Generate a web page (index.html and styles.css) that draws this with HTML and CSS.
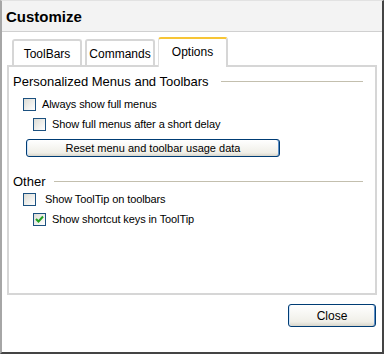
FILE: index.html
```html
<!DOCTYPE html>
<html lang="en">
<head>
    <meta charset="UTF-8">
    <title>Customize</title>
    <link rel="stylesheet" href="styles.css">
</head>
<body>
    <div class="window">
        <div class="title-bar">Customize</div>

        <div class="window-body">
            <!-- tabs -->
            <div class="tabs">
                <div class="tab">ToolBars</div>
                <div class="tab">Commands</div>
                <div class="tab active">Options</div>
            </div>

            <div class="panel">
                <div class="group-title">
                    <span>Personalized Menus and Toolbars</span>
                    <div class="rule"></div>
                </div>
                <label class="check-row first">
                    <span class="box"></span>
                    Always show full menus
                </label>
                <label class="check-row indent">
                    <span class="box"></span>
                    Show full menus after a short delay
                </label>
                <button class="btn reset-btn">Reset menu and toolbar usage data</button>

                <div class="group-title other">
                    <span>Other</span>
                    <div class="rule"></div>
                </div>
                <label class="check-row wide">
                    <span class="box"></span>
                    Show ToolTip on toolbars
                </label>
                <label class="check-row indent">
                    <span class="box">
                        <svg width="9" height="9" viewBox="0 0 9 9">
                            <path d="M1 4 L3.5 6.5 L8 1.5" fill="none" stroke="#21a121" stroke-width="2"/>
                        </svg>
                    </span>
                    Show shortcut keys in ToolTip
                </label>
            </div>

            <div class="footer">
                <button class="btn close-btn">Close</button>
            </div>
        </div>
    </div>
</body>
</html>
```

FILE: styles.css
```css
html, body {
    margin: 0;
    padding: 0;
}
body {
    font-family: "Liberation Sans", Arial, sans-serif;
    font-size: 12px;
    color: #000;
    background-color: #fff;
}
.window {
    width: 384px;
    height: 354px;
    box-sizing: border-box;
    border-top: 1px solid #e2e2e2;
    border-left: 2px solid #a6a6a6;
    border-right: 2px solid #444;
    border-bottom: 2px solid #444;
    background-color: #fff;
}
.title-bar {
    height: 30px;
    line-height: 32px;
    padding-left: 4px;
    background-color: #f3f3f3;
    border-bottom: 1px solid #d0d0d0;
    font-size: 15px;
    font-weight: bold;
}
.window-body {
    padding: 5px 5px 0 5px;
}
.tabs {
    display: flex;
    align-items: flex-end;
    gap: 3px;
    padding-left: 5px;
    height: 30px;
    margin-bottom: -2px;
    position: relative;
    z-index: 1;
}
.tab {
    width: 66px;
    height: 24px;
    line-height: 27px;
    margin-bottom: 2px;
    text-align: center;
    border: 2px solid #d6d6d6;
    border-bottom: none;
    border-radius: 3px 3px 0 0;
    background-color: #fff;
}
.tab.active {
    width: 67px;
    height: 28px;
    line-height: 26px;
    margin-bottom: 0;
    border-top: 2px solid #f7c536;
    border-left: 1px solid #e0e0e0;
    border-right: 2px solid #d6d6d6;
}
.panel {
    height: 220px;
    border: 2px solid #d6d6d6;
    padding: 6px 4px 0 4px;
}
.group-title {
    display: flex;
    align-items: center;
    height: 16px;
    font-size: 13px;
}
.group-title .rule {
    flex: 1;
    height: 0;
    border-top: 1px solid #c3bfae;
    margin: 0 8px 0 12px;
}
.group-title.other {
    margin-top: 16px;
}
.group-title.other .rule {
    margin-left: 8px;
}
.check-row {
    display: flex;
    align-items: center;
    height: 20px;
    padding-left: 10px;
    gap: 6px;
    font-size: 11px;
    letter-spacing: -0.1px;
}
.check-row.first {
    margin-top: 5px;
}
.check-row.indent {
    padding-left: 20px;
}
.check-row.wide {
    gap: 9px;
}
.box {
    width: 11px;
    height: 11px;
    border: 1px solid #1c5180;
    background: linear-gradient(135deg, #dcdcd5, #fff);
    display: flex;
    align-items: center;
    justify-content: center;
}
.btn {
    font-family: "Liberation Sans", Arial, sans-serif;
    font-size: 11px;
    color: #000;
    border: 1px solid #003c74;
    border-radius: 3px;
    background: linear-gradient(#fff, #f0efe8 80%, #d8d6cb);
    box-shadow: inset 1px 0 #cfe4fb, inset -1px 0 #5e8fc7;
    padding: 0;
    cursor: pointer;
}
.reset-btn {
    display: block;
    width: 254px;
    height: 18px;
    margin: 5px 0 0 13px;
}
.footer {
    display: flex;
    justify-content: flex-end;
    padding: 9px 1px 0 0;
}
.close-btn {
    width: 88px;
    height: 23px;
    font-size: 12px;
}
```
